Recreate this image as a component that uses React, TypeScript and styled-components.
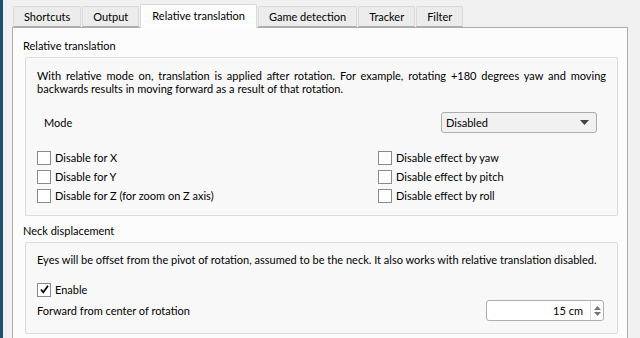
import React from 'react';
import styled, { createGlobalStyle } from 'styled-components';

const GlobalStyle = createGlobalStyle`
  html, body { margin: 0; padding: 0; background: #f0f0f0; }
  body { font-family: Lato, "Noto Sans", sans-serif; font-size: 11px; color: #000; }
`;

const tabs = ['Shortcuts', 'Output', 'Relative translation', 'Game detection', 'Tracker', 'Filter'];

function Check({ checked }: { checked?: boolean }) {
  return (
    <Box>
      {checked && (
        <svg width="11" height="11" viewBox="0 0 11 11">
          <path d="M2 5.5 L4.3 8.3 L9 1.8" fill="none" stroke="#000" strokeWidth="1.7" />
        </svg>
      )}
    </Box>
  );
}

function App() {
  return (
    <Window>
      <GlobalStyle />
      <TabBar>
        {tabs.map(t => (
          <Tab key={t} $active={t === 'Relative translation'}>{t}</Tab>
        ))}
      </TabBar>
      <Pane>
        <GroupTitle>Relative translation</GroupTitle>
        <GroupBox $height={159}>
          <Description $justify>
            With relative mode on, translation is applied after rotation. For example, rotating +180 degrees yaw and moving
            backwards results in moving forward as a result of that rotation.
          </Description>
          <ModeRow>
            <span>Mode</span>
            <Select>
              <span>Disabled</span>
              <svg width="9" height="5" viewBox="0 0 9 5"><path d="M0 0 H9 L4.5 5 Z" fill="#444" /></svg>
            </Select>
          </ModeRow>
          <CheckGrid>
            <CheckRow><Check />Disable for X</CheckRow>
            <CheckRow><Check />Disable effect by yaw</CheckRow>
            <CheckRow><Check />Disable for Y</CheckRow>
            <CheckRow><Check />Disable effect by pitch</CheckRow>
            <CheckRow><Check />Disable for Z (for zoom on Z axis)</CheckRow>
            <CheckRow><Check />Disable effect by roll</CheckRow>
          </CheckGrid>
        </GroupBox>
        <GroupTitle>Neck displacement</GroupTitle>
        <GroupBox $height={92} $top={10}>
          <Description>
            Eyes will be offset from the pivot of rotation, assumed to be the neck. It also works with relative translation disabled.
          </Description>
          <EnableRow><Check checked />Enable</EnableRow>
          <SpinRow>
            <span>Forward from center of rotation</span>
            <Spin>
              <SpinValue>15 cm</SpinValue>
              <SpinArrows>
                <svg width="7" height="4" viewBox="0 0 7 4"><path d="M0 4 H7 L3.5 0 Z" fill="#777" /></svg>
                <svg width="7" height="4" viewBox="0 0 7 4"><path d="M0 0 H7 L3.5 4 Z" fill="#777" /></svg>
              </SpinArrows>
            </Spin>
          </SpinRow>
        </GroupBox>
      </Pane>
    </Window>
  );
}

export default App;

const Window = styled.div`
  width: 640px;
  height: 338px;
  box-sizing: border-box;
  overflow: hidden;
  background: #f0f0f0;
  border-left: 3px solid #1d4f6e;
  padding: 4px 0 0 9px;
  display: flex;
  flex-direction: column;
`;

const TabBar = styled.div`
  display: flex;
  align-items: flex-end;
  height: 23px;
  padding-left: 1px;
  position: relative;
  z-index: 1;
`;

const Tab = styled.div<{ $active?: boolean }>`
  box-sizing: border-box;
  height: ${p => (p.$active ? 24 : 21)}px;
  margin-right: 1px;
  padding: ${p => (p.$active ? '0 11px 3px' : '0 10px 1px')};
  display: flex;
  align-items: center;
  border: 1px solid #d9d9d9;
  border-bottom: ${p => (p.$active ? 'none' : '1px solid #adadad')};
  border-radius: 2px 2px 0 0;
  background: ${p => (p.$active ? '#fdfdfd' : '#ececec')};
  margin-bottom: ${p => (p.$active ? '-1px' : '0')};
  white-space: nowrap;
`;

const Pane = styled.div`
  width: 616px;
  flex: 1;
  box-sizing: border-box;
  background: #fcfcfc;
  border: 1px solid #adadad;
  padding: 11px 10px 0 10px;
  display: flex;
  flex-direction: column;
`;

const GroupTitle = styled.div`
  height: 14px;
  line-height: 14px;
  margin-bottom: 4px;
`;

const GroupBox = styled.div<{ $height: number; $top?: number }>`
  box-sizing: border-box;
  height: ${p => p.$height}px;
  margin-left: 2px;
  width: 593px;
  border: 1px solid #dcdcdc;
  border-radius: 2px;
  background: #f8f8f8;
  padding: ${p => p.$top ?? 11}px 11px 0 11px;
  margin-bottom: 8px;
  display: flex;
  flex-direction: column;
`;

const Description = styled.div<{ $justify?: boolean }>`
  line-height: 13px;
  text-align: ${p => (p.$justify ? 'justify' : 'left')};
  white-space: ${p => (p.$justify ? 'normal' : 'nowrap')};
`;

const ModeRow = styled.div`
  display: flex;
  align-items: center;
  justify-content: space-between;
  margin-top: 17px;
  padding-left: 7px;
  padding-right: 9px;
`;

const Select = styled.div`
  box-sizing: border-box;
  width: 156px;
  height: 21px;
  border: 1px solid #adadad;
  border-radius: 3px;
  background: #f1f1f1;
  display: flex;
  align-items: center;
  justify-content: space-between;
  padding: 0 7px 0 4px;
`;

const CheckGrid = styled.div`
  display: grid;
  grid-template-columns: 341px 1fr;
  grid-auto-rows: 19px;
  margin-top: 15px;
`;

const CheckRow = styled.div`
  display: flex;
  align-items: center;
  gap: 4px;
`;

const Box = styled.span`
  box-sizing: border-box;
  width: 14px;
  height: 14px;
  border: 1px solid #8a8a8a;
  background: #fff;
  display: flex;
  align-items: center;
  justify-content: center;
`;

const EnableRow = styled(CheckRow)`
  margin-top: 14px;
  height: 19px;
`;

const SpinRow = styled.div`
  display: flex;
  align-items: center;
  justify-content: space-between;
  margin-top: 1px;
  padding-right: 2px;
`;

const Spin = styled.div`
  box-sizing: border-box;
  width: 118px;
  height: 21px;
  border: 1px solid #adadad;
  border-radius: 3px;
  background: #fff;
  display: flex;
  align-items: stretch;
`;

const SpinValue = styled.span`
  flex: 1;
  text-align: right;
  padding-right: 7px;
  line-height: 19px;
  border-right: 1px solid #dcdcdc;
`;

const SpinArrows = styled.span`
  width: 12px;
  display: flex;
  flex-direction: column;
  align-items: center;
  justify-content: center;
  gap: 2px;
`;
